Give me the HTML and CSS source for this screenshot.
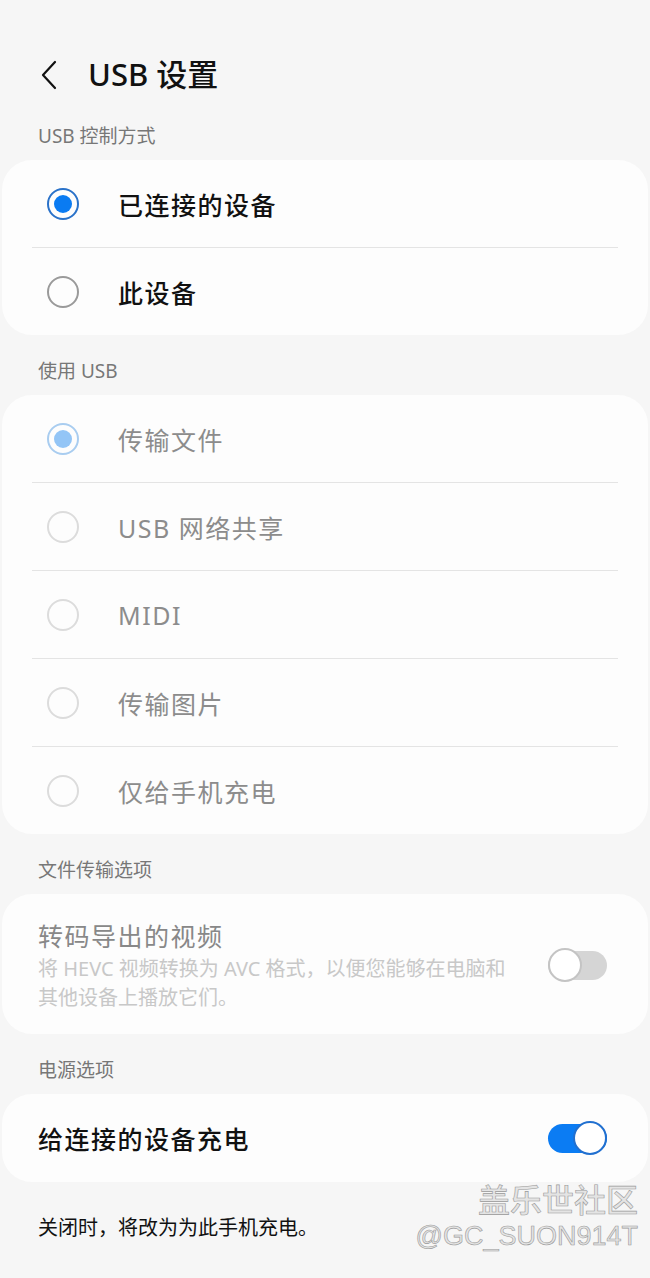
FILE: index.html
```html
<!DOCTYPE html>
<html lang="zh-CN">
<head>
    <meta charset="UTF-8">
    <meta name="viewport" content="width=device-width, initial-scale=1.0">
    <title>USB 设置</title>
    <link rel="stylesheet" href="styles.css">
</head>
<body>
    <div class="page">
        <div class="header">
            <svg class="back" width="20" height="32" viewBox="0 0 20 32">
                <path d="M15 3 L3 16 L15 29" fill="none" stroke="#111" stroke-width="2.2" stroke-linecap="round" stroke-linejoin="round"/>
            </svg>
            <h1>USB 设置</h1>
        </div>

        <div class="section-label">USB 控制方式</div>
        <div class="card">
            <div class="row">
                <span class="radio checked"></span>
                <span class="row-text">已连接的设备</span>
            </div>
            <div class="divider"></div>
            <div class="row">
                <span class="radio"></span>
                <span class="row-text">此设备</span>
            </div>
        </div>

        <div class="section-label">使用 USB</div>
        <div class="card disabled">
            <div class="row">
                <span class="radio checked"></span>
                <span class="row-text">传输文件</span>
            </div>
            <div class="divider"></div>
            <div class="row">
                <span class="radio"></span>
                <span class="row-text">USB 网络共享</span>
            </div>
            <div class="divider"></div>
            <div class="row">
                <span class="radio"></span>
                <span class="row-text">MIDI</span>
            </div>
            <div class="divider"></div>
            <div class="row">
                <span class="radio"></span>
                <span class="row-text">传输图片</span>
            </div>
            <div class="divider"></div>
            <div class="row">
                <span class="radio"></span>
                <span class="row-text">仅给手机充电</span>
            </div>
        </div>

        <div class="section-label">文件传输选项</div>
        <div class="card disabled">
            <div class="switch-row tall">
                <div class="switch-text">
                    <div class="switch-title">转码导出的视频</div>
                    <div class="switch-sub">将 HEVC 视频转换为 AVC 格式，以便您能够在电脑和其他设备上播放它们。</div>
                </div>
                <span class="toggle"></span>
            </div>
        </div>

        <div class="section-label">电源选项</div>
        <div class="card">
            <div class="switch-row">
                <div class="switch-text">
                    <div class="switch-title">给连接的设备充电</div>
                </div>
                <span class="toggle on"></span>
            </div>
        </div>

        <p class="footnote">关闭时，将改为为此手机充电。</p>

        <div class="watermark">
            <div class="wm-name">盖乐世社区</div>
            <div class="wm-user">@GC_SUON914T</div>
        </div>
    </div>
</body>
</html>
```

FILE: styles.css
```css
body {
    margin: 0;
    padding: 0;
    background-color: #f6f6f6;
    color: #111;
    font-family: "Noto Sans", "Noto Sans CJK SC", sans-serif;
}
.page {
    position: relative;
    height: 1278px;
    overflow: hidden;
}
.header {
    height: 100px;
    box-sizing: border-box;
    padding: 54px 0 0 40px;
    display: flex;
    align-items: flex-start;
}
.back {
    margin-top: 5px;
}
.header h1 {
    margin: 0 0 0 28px;
    font-size: 31px;
    font-weight: 500;
    line-height: 40px;
    color: #111;
}
.section-label {
    padding: 24px 0 12px 38px;
    font-size: 19px;
    line-height: 24px;
    color: #777;
}
.card {
    margin: 0 2px;
    background: #fdfdfd;
    border-radius: 30px;
}
.row {
    height: 87px;
    display: flex;
    align-items: center;
    padding-left: 45px;
}
.row-text {
    margin-left: 39px;
    font-size: 25px;
    font-weight: 500;
    letter-spacing: 1.5px;
    color: #111;
}
.divider {
    height: 1px;
    margin: 0 30px;
    background: #e4e4e4;
}
.radio {
    box-sizing: border-box;
    width: 32px;
    height: 32px;
    border-radius: 50%;
    border: 2px solid #9a9a9a;
    display: flex;
    align-items: center;
    justify-content: center;
}
.radio.checked {
    border-color: #2a72c9;
}
.radio.checked::after {
    content: "";
    width: 18px;
    height: 18px;
    border-radius: 50%;
    background: #0a7bf2;
}
.disabled .row-text {
    color: #8c8c8c;
    font-weight: 400;
}
.disabled .radio {
    border-color: #dcdcdc;
}
.disabled .radio.checked {
    border-color: #a9cdf0;
}
.disabled .radio.checked::after {
    background: #93c5f6;
}
.switch-row {
    height: 88px;
    display: flex;
    align-items: center;
    padding: 0 41px 0 36px;
}
.switch-row.tall {
    height: 140px;
}
.switch-text {
    flex: 1;
}
.switch-title {
    font-size: 25px;
    font-weight: 500;
    letter-spacing: 1.5px;
    color: #111;
}
.switch-sub {
    margin-top: 1px;
    width: 480px;
    font-size: 20px;
    line-height: 29px;
    color: #c8c8c8;
}
.disabled .switch-title {
    color: #888;
    font-weight: 400;
}
.toggle {
    position: relative;
    width: 59px;
    height: 29px;
    border-radius: 15px;
    background: #d5d5d5;
    margin-left: 20px;
    margin-top: 2px;
}
.toggle::after {
    content: "";
    position: absolute;
    left: 0;
    top: -3px;
    box-sizing: border-box;
    width: 34px;
    height: 34px;
    border-radius: 50%;
    background: #fff;
    border: 2px solid #c4c4c4;
}
.toggle.on {
    background: #0b7cf3;
    margin-top: 0;
}
.toggle.on::after {
    left: auto;
    right: 0;
    border-color: #2170d0;
}
.footnote {
    margin: 0;
    padding: 32px 0 0 38px;
    font-size: 20px;
    line-height: 28px;
    color: #111;
}
.watermark {
    position: absolute;
    right: 12px;
    top: 1180px;
    text-align: right;
    color: #e4e4e4;
    -webkit-text-stroke: 0.6px #9a9a9a;
}
.wm-name {
    font-size: 32px;
    line-height: 40px;
    font-weight: 500;
}
.wm-user {
    font-size: 27px;
    line-height: 32px;
    font-family: "Liberation Sans", sans-serif;
}
```
